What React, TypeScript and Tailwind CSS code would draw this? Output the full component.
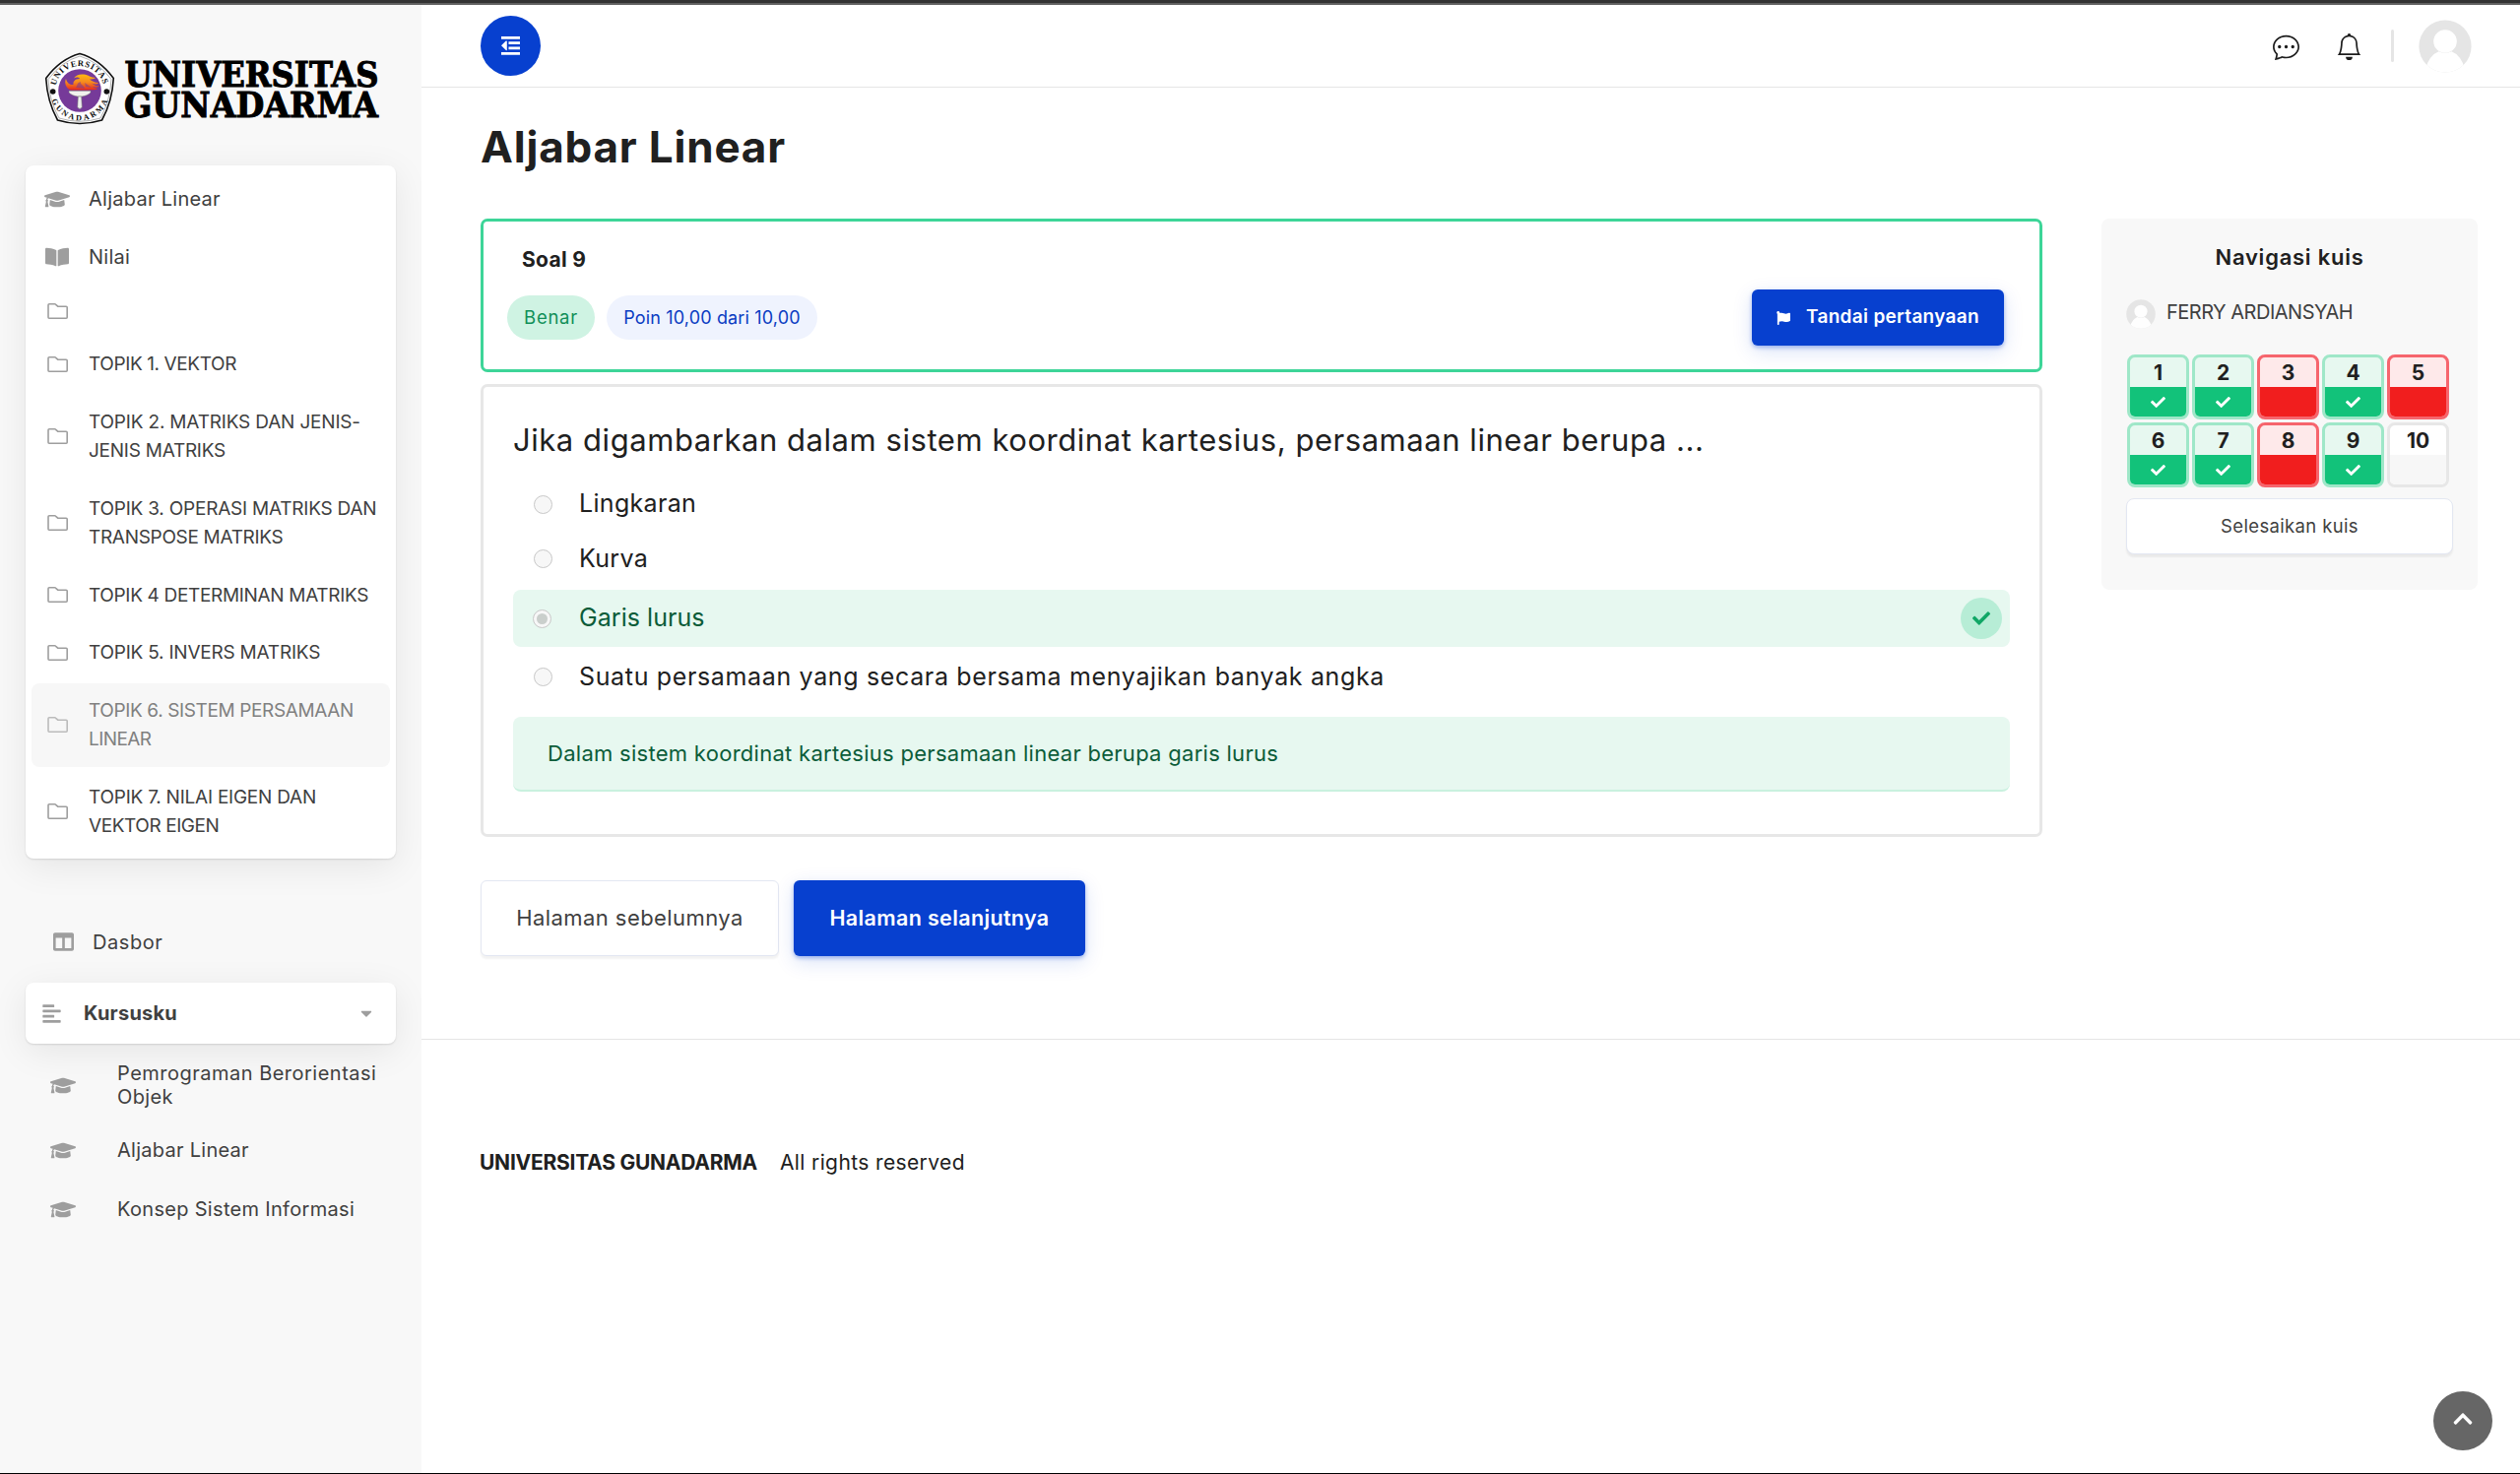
import React from "react";
import { FaAlignLeft, FaBookOpen, FaCaretDown, FaCheck, FaChevronUp, FaColumns, FaFlag, FaGraduationCap } from "react-icons/fa";
import { BsBell, BsChatDots } from "react-icons/bs";

function Logo() {
  return (
    <svg viewBox="40 48 350 84" className="h-[84px] w-[350px] overflow-visible">
      <defs>
        <path id="arc-top" d="M56.6 87.5 A24.8 24.8 0 0 1 105.4 87.5" />
        <path id="arc-bottom" d="M51.6 99 A30.2 30.2 0 0 0 110.4 99" />
        <linearGradient id="flame" x1="0" y1="0" x2="0" y2="1">
          <stop offset="0" stopColor="#fdb913" />
          <stop offset="0.5" stopColor="#f58a1f" />
          <stop offset="1" stopColor="#e5261f" />
        </linearGradient>
      </defs>
      <path d="M81 54.5 Q101 60 115.3 79.5 Q114 103 103.5 122 Q81 129 58.5 122 Q48 103 46.7 79.5 Q61 60 81 54.5Z" fill="#fff" stroke="#111" strokeWidth="1.6" />
      <path d="M81 57 Q99 62 113 80.5 Q112 102 102 120 Q81 126.500 60 120 Q50 102 49 80.500 Q63 62 81 57Z" fill="none" stroke="#666" strokeWidth="0.5" />
      <circle cx="81" cy="92" r="21.8" fill="#763a99" />
      <circle cx="53.7" cy="93" r="2.8" fill="#111" />
      <circle cx="108.3" cy="93" r="2.8" fill="#111" />
      <text className="font-['Liberation_Serif',serif] font-bold" fontSize="8.6" fill="#111">
        <textPath href="#arc-top" textLength="66" startOffset="0.500">UNIVERSITAS</textPath>
      </text>
      <text className="font-['Liberation_Serif',serif] font-bold" fontSize="8.2" fill="#111">
        <textPath href="#arc-bottom" textLength="74" startOffset="3">GUNADARMA</textPath>
      </text>
      <path d="M67 80 C65 84 67 90 72 91.500 H90 C94 91 98 91.500 99 90 C96 89.500 95 89 94 88 C97 89 100 88.500 100.500 87.500 C97 87.500 95 86 93 84.500 C96 86 99 86 100 84 C96 84 93 82 91 80.500 C93 80.500 96 80.500 97 79 C92 79 90 76 85 75.500 C81 75 77 76 75 79.500 C78 78 80 78.500 81 80 C76 80 74 83 74.500 86 C72 86.500 68 85 67 80Z" fill="url(#flame)" />
      <path d="M77 89 C79 86 78 84 82 83 C81 86 85 86 86 90Z M86 84 L93 89 L87 88Z" fill="#763a99" opacity="0.55" />
      <path d="M70 92.300 H92 V94 C90 96.500 86 97.500 83 98 H79 C76 97.500 72 96.500 70 94Z" fill="#f1f1ee" stroke="#777" strokeWidth="0.5" />
      <path d="M79.300 98 H82.700 L83.300 109 Q81 112 78.700 109Z" fill="#eee" stroke="#777" strokeWidth="0.6" />
      <g className="font-['DejaVu_Serif',serif] font-bold" fill="#000" stroke="#000" strokeWidth="1" fontSize="34.5">
        <text x="126.500" y="88.300" textLength="258" lengthAdjust="spacingAndGlyphs">UNIVERSITAS</text>
        <text x="126" y="118.600" textLength="258" lengthAdjust="spacingAndGlyphs">GUNADARMA</text>
      </g>
    </svg>
  );
}

function FolderIcon() {
  return (
    <svg viewBox="0 0 21 16" className="h-4 w-[21px]" fill="none" stroke="currentColor" strokeWidth="1.6" strokeLinejoin="round">
      <path d="M1 1.800Q1 .8 2 .8H7.500Q8.200 .8 8.700 1.300L10.700 3.200H19.200Q20.200 3.200 20.200 4.200V14.200Q20.200 15.200 19.200 15.200H2Q1 15.200 1 14.200Z" />
    </svg>
  );
}

function OutdentIcon() {
  return (
    <svg viewBox="0 0 19 19" className="h-[19px] w-[19px]" fill="currentColor">
      <path d="M0 0H19V2.700H0ZM7.500 5.200H19V8H7.500ZM7.500 10.400H19V13.200H7.500ZM0 15.900H19V18.700H0ZM0 9.300 4.800 4.600Q5.800 4 5.800 5V13.500Q5.800 14.600 4.800 13.900Z" />
    </svg>
  );
}

function Avatar({ className, base }: { className: string; base: string }) {
  return (
    <svg viewBox="0 0 54 54" className={className}>
      <clipPath id={"clip-" + base.slice(1)}>
        <circle cx="27" cy="27" r="26.600" />
      </clipPath>
      <g clipPath={"url(#clip-" + base.slice(1) + ")"}>
        <rect width="54" height="54" fill="#e5e5e5" />
        <circle cx="27" cy="22" r="11.800" fill={base} />
        <path d="M7 50 Q11 36 20.500 32.300 Q27 35.500 33.500 32.300 Q43 36 47 50 V54 H7Z" fill={base} />
      </g>
    </svg>
  );
}

type Line = [text: string, tracking: string];

const topics: { height: string; lines: Line[]; active?: boolean }[] = [
  { height: "h-[47px]", lines: [] },
  { height: "h-[55.75px]", lines: [["TOPIK 1. VEKTOR", "tracking-[-0.39px]"]] },
  { height: "h-[84.75px]", lines: [["TOPIK 2. MATRIKS DAN JENIS-", "tracking-[-0.18px]"], ["JENIS MATRIKS", "tracking-[-0.25px]"]] },
  { height: "h-[84.75px]", lines: [["TOPIK 3. OPERASI MATRIKS DAN", "tracking-[-0.22px]"], ["TRANSPOSE MATRIKS", "tracking-[-0.31px]"]] },
  { height: "h-[55.75px]", lines: [["TOPIK 4 DETERMINAN MATRIKS", "tracking-[-0.33px]"]] },
  { height: "h-[55.75px]", lines: [["TOPIK 5. INVERS MATRIKS", "tracking-[-0.22px]"]] },
  { height: "h-[84.75px]", lines: [["TOPIK 6. SISTEM PERSAMAAN", "tracking-[-0.37px]"], ["LINEAR", "tracking-[-0.57px]"]], active: true },
  { height: "h-[84.75px]", lines: [["TOPIK 7. NILAI EIGEN DAN", "tracking-[-0.24px]"], ["VEKTOR EIGEN", "tracking-[-0.42px]"]] },
];

const courses: { height: string; lines: Line[] }[] = [
  { height: "h-[84px]", lines: [["Pemrograman Berorientasi", "tracking-[0.49px]"], ["Objek", "tracking-[0.37px]"]] },
  { height: "h-[48px]", lines: [["Aljabar Linear", "tracking-[0.27px]"]] },
  { height: "h-[72px]", lines: [["Konsep Sistem Informasi", "tracking-[0.31px]"]] },
];

function Sidebar() {
  return (
    <aside className="flex w-[428px] shrink-0 flex-col overflow-hidden bg-[#f8f8f8] px-[26px] text-[20px] text-[#404040]">
      <div className="mt-[43px] ml-[14px]">
        <Logo />
      </div>
      <nav className="mt-[36px] flex h-[704px] flex-col gap-[3px] rounded-lg bg-white px-1.5 pt-1.5 shadow-[0_1px_2px_rgba(0,0,0,0.12),0_8px_36px_rgba(0,0,0,0.08)]">
        <div className="flex h-[56px] shrink-0 items-center pl-[13px]">
          <FaGraduationCap className="h-[21px] w-[26px] text-[#9e9e9e]" />
          <span className="ml-[19px] tracking-[0.27px]">Aljabar Linear</span>
        </div>
        <div className="flex h-[56px] shrink-0 items-center pb-px pl-[14px]">
          <FaBookOpen className="h-[22px] w-[24px] text-[#9e9e9e]" />
          <span className="ml-[20px] tracking-[0.24px]">Nilai</span>
        </div>
        {topics.map((t, i) => (
          <div key={i} className={`flex shrink-0 items-center rounded-lg pl-4 text-[19px] leading-[29px] ${t.height} ${t.active ? "bg-[#f7f7f7] text-[#808080]" : ""}`}>
            <span className={t.active ? "text-[#bbb]" : "text-[#9e9e9e]"}>
              <FolderIcon />
            </span>
            <div className="ml-[21px] flex flex-col whitespace-nowrap">
              {t.lines.map(([text, tracking]) => (
                <span key={text} className={tracking}>{text}</span>
              ))}
            </div>
          </div>
        ))}
      </nav>
      <div className="mt-[56px] flex h-[56px] items-center pl-7">
        <FaColumns className="h-[21px] w-[21px] text-[#9e9e9e]" />
        <span className="mt-px ml-[19px] tracking-[0.58px]">Dasbor</span>
      </div>
      <div className="mt-[14px] flex h-[62px] items-center rounded-lg bg-white pl-[17px] shadow-[0_1px_2px_rgba(0,0,0,0.12),0_8px_36px_rgba(0,0,0,0.08)]">
        <FaAlignLeft className="h-[21px] w-[19px] text-[#9e9e9e]" />
        <span className="ml-[23px] font-bold tracking-[0.22px]">Kursusku</span>
        <FaCaretDown className="mr-[23px] ml-auto h-[18px] w-[14px] text-[#9e9e9e]" />
      </div>
      {courses.map((c) => (
        <div key={c.lines[0][0]} className={`flex shrink-0 items-center pl-[25px] leading-[23.5px] ${c.height}`}>
          <FaGraduationCap className="h-[21px] w-[26px] text-[#9e9e9e]" />
          <div className="mt-px ml-[42px] flex flex-col whitespace-nowrap">
            {c.lines.map(([text, tracking]) => (
              <span key={text} className={tracking}>{text}</span>
            ))}
          </div>
        </div>
      ))}
    </aside>
  );
}

function Header() {
  return (
    <header className="flex h-[84px] shrink-0 items-center border-b border-[#e5e5e5] pr-[50px] pl-[60px]">
      <button className="flex size-[61px] items-center justify-center rounded-full bg-[#0740cf] text-white">
        <OutdentIcon />
      </button>
      <div className="mr-4 ml-auto flex items-center text-[#1d1d1d]">
        <BsChatDots className="mt-0.5 size-[27px]" />
        <BsBell className="mt-0.5 ml-[37px] size-[27px]" />
        <span className="ml-[29px] h-[33px] w-[3px] rounded bg-[#e5e5e5]" />
        <Avatar className="-ml-0 ml-[25px] size-[54px]" base="#ffffff" />
      </div>
    </header>
  );
}

function Radio({ checked }: { checked?: boolean }) {
  return (
    <span className="flex size-[19px] items-center justify-center rounded-full border border-[#c8c8c8] bg-[#f7f7f7]">
      {checked && <span className="size-[11px] rounded-full bg-[#cacfcc]" />}
    </span>
  );
}

function Question() {
  return (
    <div className="flex w-[1586px] flex-col">
      <section className="h-[156px] rounded-[7px] border-[3px] border-[#3dd598] pt-[23px] pr-[36px] pl-[24px]">
        <h2 className="h-[30px] pl-[15px] text-[21px] leading-[32px] font-bold tracking-[0.3px]">Soal 9</h2>
        <div className="mt-4 flex h-[57px] items-center">
          <span className="flex h-[45px] w-[89px] items-center justify-center rounded-full bg-[#cff3e3] text-[18.5px] tracking-[0.75px] text-[#0f8f58]">Benar</span>
          <span className="ml-3 flex h-[45px] w-[214px] items-center justify-center rounded-full bg-[#eff3fe] text-[18px] tracking-[0.16px] text-[#0a3cc2]">Poin 10,00 dari 10,00</span>
          <button className="ml-auto flex h-[57px] w-[256px] items-center rounded-md bg-[#0740cf] pl-[25px] text-white shadow-[0_2px_4px_rgba(7,64,207,0.35),0_6px_20px_rgba(7,64,207,0.15)]">
            <FaFlag className="mt-px size-[14px]" />
            <span className="ml-4 text-[19px] font-semibold tracking-[0.31px]">Tandai pertanyaan</span>
          </button>
        </div>
      </section>

      <section className="mt-3 h-[460px] rounded-[7px] border-[3px] border-[#e7e7e7] px-[30px] pt-[31px]">
        <p className="h-[45px] text-[31px] leading-[45px] tracking-[0.55px] whitespace-nowrap">Jika digambarkan dalam sistem koordinat kartesius, persamaan linear berupa ...</p>
        <div className="mt-[15px] flex h-14 items-center pl-[21px] text-[25px]">
          <Radio />
          <span className="ml-[27px] tracking-[0.31px]">Lingkaran</span>
        </div>
        <div className="flex h-[55px] items-center pl-[21px] text-[25px]">
          <Radio />
          <span className="ml-[27px] tracking-[0.3px]">Kurva</span>
        </div>
        <div className="mt-1 flex h-[58px] items-center rounded-lg bg-[#e7f8f0] pr-2 pl-[20px] text-[25px] text-[#0b5c39]">
          <Radio checked />
          <span className="ml-[28px] tracking-[0.05px]">Garis lurus</span>
          <span className="ml-auto flex size-[42px] items-center justify-center rounded-full bg-[#b7edd6] text-[#10a766]">
            <FaCheck className="size-[18px]" />
          </span>
        </div>
        <div className="flex h-[61px] items-center pl-[21px] text-[25px]">
          <Radio />
          <span className="ml-[27px] tracking-[0.65px] whitespace-nowrap">Suatu persamaan yang secara bersama menyajikan banyak angka</span>
        </div>
        <div className="mt-2.5 flex h-[76px] items-center rounded-lg border-b-2 border-[#c9f1df] bg-[#e7f8f0] pl-[35px] text-[22px] tracking-[0.28px] text-[#0b5c39]">
          Dalam sistem koordinat kartesius persamaan linear berupa garis lurus
        </div>
      </section>

      <div className="mt-[44px] flex h-[77px] gap-[15px]">
        <button className="w-[303px] rounded-md border border-[#e3e7f2] bg-white text-[22px] tracking-[0.42px] text-[#404040] shadow-[0_3px_2px_rgba(0,0,0,0.05)]">Halaman sebelumnya</button>
        <button className="w-[296px] rounded-md bg-[#0740cf] text-[21.5px] font-semibold tracking-[0.36px] text-white shadow-[0_2px_4px_rgba(7,64,207,0.35),0_6px_20px_rgba(7,64,207,0.15)]">Halaman selanjutnya</button>
      </div>
    </div>
  );
}

type State = "right" | "wrong" | "open";
const answers: State[] = ["right", "right", "wrong", "right", "wrong", "right", "right", "wrong", "right", "open"];
const frame: Record<State, string> = { right: "border-[#9fe7c8] bg-[#e7f8f0]", wrong: "border-[#f6656d] bg-[#fee9ea]", open: "border-[#e7e7e7] bg-white" };
const fill: Record<State, string> = { right: "bg-[#12c27a]", wrong: "bg-[#f11e1e]", open: "bg-[#f7f7f7]" };

function QuizNav() {
  return (
    <section className="h-[377px] w-[382px] rounded-lg bg-[#f8f8f8] px-[25px] pt-[24px]">
      <h3 className="text-center text-[22px] leading-[31px] font-semibold tracking-[0.75px]">Navigasi kuis</h3>
      <div className="mt-[25px] flex h-[30px] items-center">
        <Avatar className="mt-1 size-[30px]" base="#fefefe" />
        <span className="ml-[11px] text-[20px] tracking-[-0.5px] text-[#404040]">FERRY ARDIANSYAH</span>
      </div>
      <div className="mt-7 ml-px grid w-[327px] grid-cols-5 gap-[3px]">
        {answers.map((state, i) => (
          <div key={i} className={`flex h-[66px] flex-col overflow-hidden rounded-lg border-[3px] text-center ${frame[state]}`}>
            <span className="h-[30px] text-[21px] leading-[31px] font-bold">{i + 1}</span>
            <span className={`flex h-[30px] items-center justify-center text-white ${fill[state]}`}>
              {state === "right" && <FaCheck className="size-[15px]" />}
            </span>
          </div>
        ))}
      </div>
      <button className="mt-[11px] h-[57px] w-[332px] rounded-lg border border-[#e3e7f2] bg-white text-[18.5px] tracking-[0.35px] text-[#404040] shadow-[0_3px_2px_rgba(0,0,0,0.06)]">Selesaikan kuis</button>
    </section>
  );
}

export default function App() {
  return (
    <div className="relative flex h-[1497px] w-[2559px] flex-col overflow-hidden border-b border-black bg-white font-['Inter',sans-serif] text-[#202020]">
      <div className="h-[5px] shrink-0 border-b-2 border-[#616161] bg-[#333]" />
      <div className="flex min-h-0 flex-1">
        <Sidebar />
        <div className="flex flex-1 flex-col">
          <Header />
          <main className="px-[60px]">
            <h1 className="mt-[30px] text-[44px] leading-[60px] font-bold tracking-[0.81px]">Aljabar Linear</h1>
            <div className="mt-[43px] flex items-start gap-[60px]">
              <Question />
              <QuizNav />
            </div>
          </main>
          <footer className="mt-[84px] flex gap-[23px] border-t border-[#e5e5e5] px-[59px] pt-[109px] text-[21px] leading-[31px]">
            <span className="font-bold tracking-[-0.25px]">UNIVERSITAS GUNADARMA</span>
            <span className="tracking-[0.38px]">All rights reserved</span>
          </footer>
        </div>
      </div>
      <button className="absolute right-[28px] bottom-[23px] flex size-[60px] items-center justify-center rounded-full bg-[#666] text-white">
        <FaChevronUp className="mb-1 size-[22px]" />
      </button>
    </div>
  );
}
